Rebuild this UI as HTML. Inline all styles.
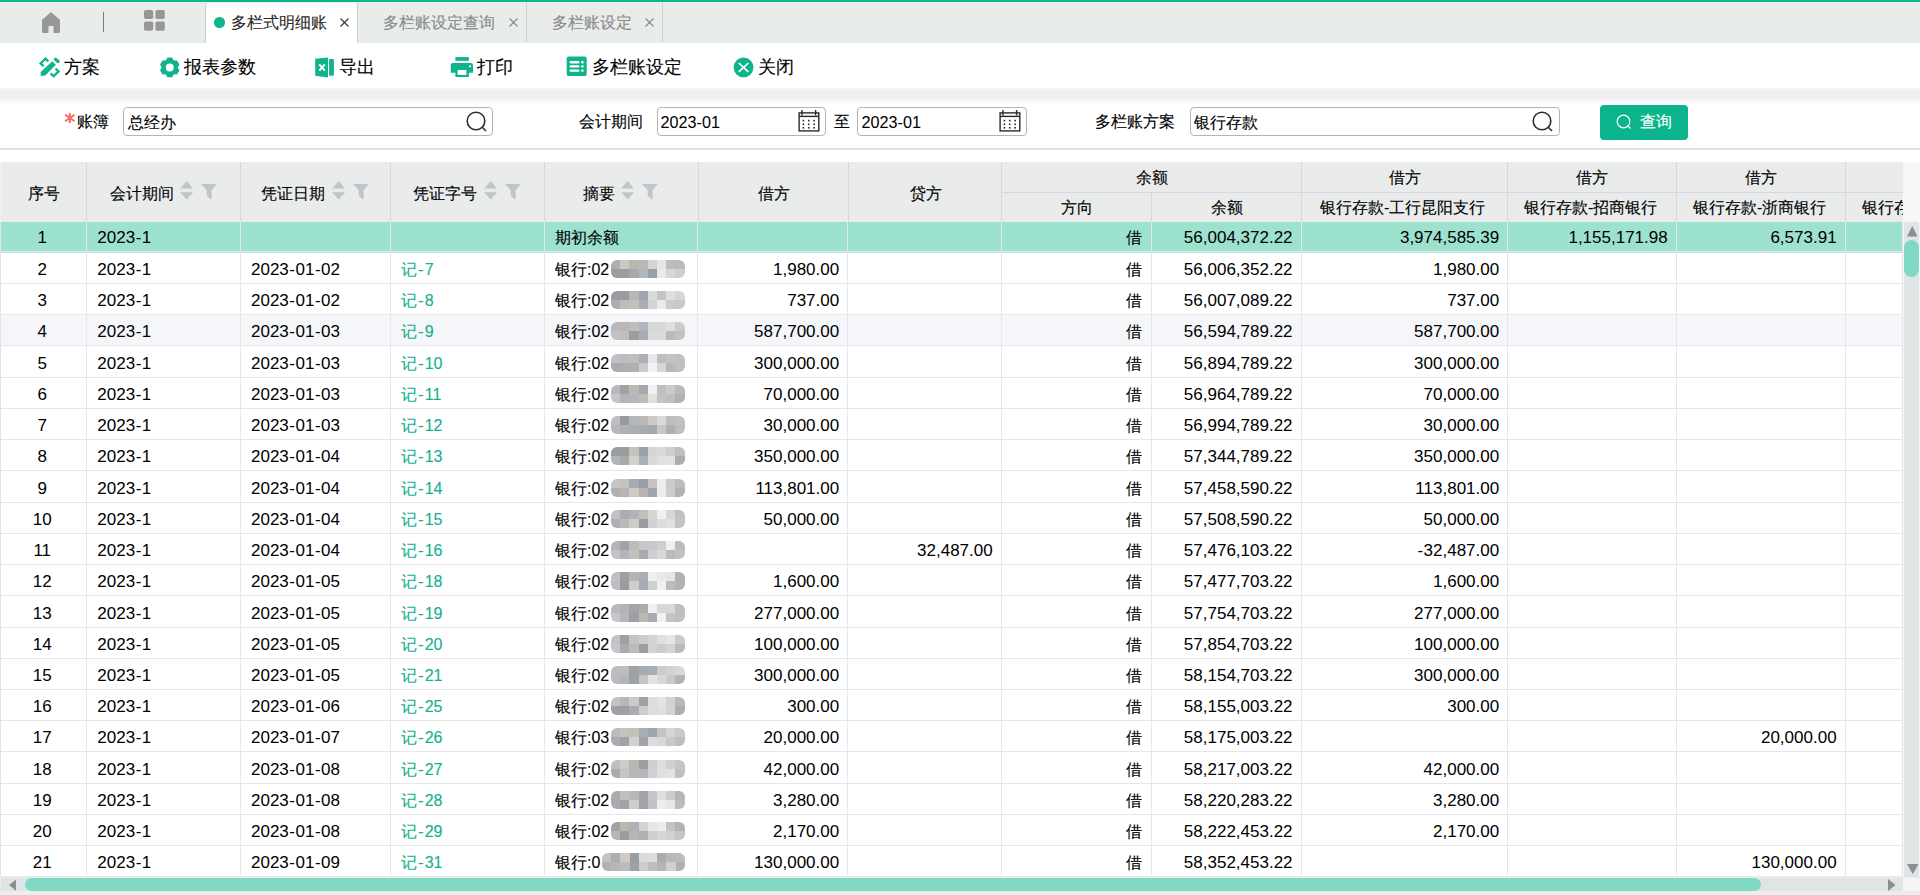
<!DOCTYPE html><html><head><meta charset="utf-8"><title>多栏式明细账</title><style>
*{box-sizing:border-box;margin:0;padding:0}
html,body{width:1920px;height:895px;overflow:hidden;background:#fff}
body{position:relative;font-family:"Liberation Sans",sans-serif;color:#000}
.t16,.t18{-webkit-text-stroke:0.12px currentColor}
.a{position:absolute}
.t16{font-size:16px;line-height:20px;white-space:nowrap}
.t18{font-size:18px;line-height:22px;white-space:nowrap}
.num{font-size:17px;line-height:20px;white-space:nowrap}
.hy{margin:0 0.5px}
.row{position:absolute;left:0;width:1903px;border-bottom:1px solid #e7e7ea}
.c{position:absolute;top:0;height:100%;display:flex;align-items:center;white-space:nowrap;overflow:hidden}
.vb{position:absolute;top:222px;height:655px;width:1px;background:#e7e7ea}
.hb{position:absolute;background:#d6d6e6}
.mz{position:absolute;display:grid;grid-template-columns:repeat(8,9.2px);grid-template-rows:repeat(2,9px);border-radius:6px;overflow:hidden}
</style></head><body>
<div class="a" style="left:0;top:0;width:1920px;height:2px;background:#0fb38c"></div>
<div class="a" style="left:0;top:2px;width:1920px;height:40.5px;background:#e8eceb"></div>
<svg class="a" style="left:42px;top:12px" width="18" height="21" viewBox="0 0 18 21"><path d="M9 0 L0 8 L0 19.5 Q0 21 1.5 21 L6.5 21 L6.5 14 L11.5 14 L11.5 21 L16.5 21 Q18 21 18 19.5 L18 8 Z" fill="#979797"/></svg>
<div class="a" style="left:103px;top:12px;width:1.2px;height:20px;background:#7a7a7a"></div>
<svg class="a" style="left:144px;top:10px" width="21" height="21" viewBox="0 0 21 21" fill="#979797"><rect x="0" y="0" width="9.2" height="9" rx="1.8"/><rect x="11.4" y="0" width="9.4" height="9" rx="1.8"/><rect x="0" y="11.4" width="9.2" height="9.4" rx="1.8"/><rect x="11.4" y="11.4" width="9.4" height="9.4" rx="1.8"/></svg>
<div class="a" style="left:205px;top:2.5px;width:152px;height:40.5px;background:#fff;border-left:1px solid #c9c9cf;border-radius:3px 3px 0 0"></div>
<div class="a" style="left:214px;top:17px;width:10.5px;height:10.5px;border-radius:50%;background:#0fb38c"></div>
<div class="a t16" style="left:231px;top:13px;color:#2a2a2a">多栏式明细账</div>
<svg class="a" style="left:340px;top:18px" width="9" height="9" viewBox="0 0 9 9"><path d="M0.5 0.5 L8.5 8.5 M8.5 0.5 L0.5 8.5" stroke="#333" stroke-width="1.1"/></svg>
<div class="a" style="left:357px;top:3px;width:1px;height:39px;background:#cfd2d2"></div>
<div class="a t16" style="left:383px;top:13px;color:#8a8a8a">多栏账设定查询</div>
<svg class="a" style="left:509px;top:18px" width="9" height="9" viewBox="0 0 9 9"><path d="M0.5 0.5 L8.5 8.5 M8.5 0.5 L0.5 8.5" stroke="#8a8a8a" stroke-width="1.1"/></svg>
<div class="a" style="left:526px;top:3px;width:1px;height:39px;background:#cfd2d2"></div>
<div class="a t16" style="left:552px;top:13px;color:#8a8a8a">多栏账设定</div>
<svg class="a" style="left:645px;top:18px" width="9" height="9" viewBox="0 0 9 9"><path d="M0.5 0.5 L8.5 8.5 M8.5 0.5 L0.5 8.5" stroke="#8a8a8a" stroke-width="1.1"/></svg>
<div class="a" style="left:662px;top:3px;width:1px;height:39px;background:#cfd2d2"></div>
<svg class="a" style="left:36px;top:53px" width="28" height="28" viewBox="0 0 28 28"><path d="M12.3 8.4 L9.4 5.6 L4.6 10.4 L7.5 13.2" stroke="#0fb38c" stroke-width="2.3" fill="none"/><path d="M19.4 6.3 L22.2 8.5" stroke="#0fb38c" stroke-width="3.2" stroke-linecap="round" fill="none"/><path d="M16.3 8.2 L19.9 11.7 L9 22.8 H4.7 V19 Z" fill="#0fb38c"/><path d="M19.5 15.5 L22.6 18.4 L17.6 23.2 L14.6 20.4" stroke="#0fb38c" stroke-width="2.3" fill="none"/></svg>
<div class="a t18" style="left:63.5px;top:56px">方案</div>
<svg class="a" style="left:156px;top:53px" width="28" height="28" viewBox="0 0 28 28"><path fill="#0fb38c" fill-rule="evenodd" d="M10.24 6.88 L11.31 4.60 L16.19 4.60 L17.26 6.88 L18.51 7.60 L21.02 7.38 L23.46 11.62 L22.02 13.68 L22.02 15.12 L23.46 17.18 L21.02 21.42 L18.51 21.20 L17.26 21.92 L16.19 24.20 L11.31 24.20 L10.24 21.92 L8.99 21.20 L6.48 21.42 L4.04 17.18 L5.48 15.12 L5.48 13.68 L4.04 11.62 L6.48 7.38 L8.99 7.60 Z M13.75 10.4 A4 4 0 1 0 13.75 18.4 A4 4 0 1 0 13.75 10.4 Z"/></svg>
<div class="a t18" style="left:183.75px;top:56px">报表参数</div>
<svg class="a" style="left:310px;top:53px" width="28" height="28" viewBox="0 0 28 28"><path d="M5.2 5.8 L18 4.5 V24.4 L5.2 22.8 Z" fill="#0fb38c"/><path d="M19.1 5.9 H22.7 Q23.9 5.9 23.9 7.1 V21.6 Q23.9 22.8 22.7 22.8 H19.1 Z" fill="#0fb38c"/><path d="M9.3 11.4 L14.8 17.7 M14.8 11.4 L9.3 17.7" stroke="#fff" stroke-width="1.9"/></svg>
<div class="a t18" style="left:338.75px;top:56px">导出</div>
<svg class="a" style="left:447px;top:53px" width="30" height="28" viewBox="0 0 30 28"><rect x="8.4" y="4.1" width="13.5" height="3.7" fill="#0fb38c"/><path d="M5.9 10 H23.9 Q26 10 26 12.1 V19.7 H21.9 V24.1 H8.4 V19.7 H3.75 V12.1 Q3.75 10 5.9 10 Z" fill="#0fb38c"/><rect x="10.6" y="17" width="8.8" height="4.9" fill="#fff"/><circle cx="23" cy="13.3" r="1.1" fill="#fff"/></svg>
<div class="a t18" style="left:477px;top:56px">打印</div>
<svg class="a" style="left:562px;top:52px" width="28" height="28" viewBox="0 0 28 28"><rect x="4.7" y="4.4" width="20" height="19.7" rx="2.2" fill="#0fb38c"/><rect x="7.5" y="9.1" width="10" height="2.3" rx="1.1" fill="#fff"/><rect x="7.5" y="13.2" width="10" height="2.4" rx="1.1" fill="#fff"/><rect x="7.5" y="17.4" width="10" height="2.4" rx="1.1" fill="#fff"/><rect x="19.1" y="9.1" width="2.6" height="2.3" rx="1" fill="#fff"/><rect x="19.1" y="13.2" width="2.6" height="2.4" rx="1" fill="#fff"/><rect x="19.1" y="17.4" width="2.6" height="2.4" rx="1" fill="#fff"/></svg>
<div class="a t18" style="left:592px;top:56px">多栏账设定</div>
<svg class="a" style="left:729px;top:53px" width="28" height="28" viewBox="0 0 28 28"><circle cx="14.55" cy="14.4" r="9.9" fill="#0fb38c"/><path d="M9.8 10 L19.3 18.8 M19.3 10 L9.8 18.8" stroke="#fff" stroke-width="1.7"/></svg>
<div class="a t18" style="left:757.5px;top:56px">关闭</div>
<div class="a" style="left:0;top:88px;width:1920px;height:16px;background:linear-gradient(to bottom,#f5f5f5 0%,#ededed 35%,#f3f3f3 68%,#fefefe 100%)"></div>
<svg class="a" style="left:60px;top:108px" width="20" height="20" viewBox="0 0 20 20"><path d="M9.8 5.1 V14.9 M5.1 6.7 L14.5 13.2 M14.5 6.7 L5.1 13.2" stroke="#f4676b" stroke-width="2"/></svg>
<div class="a t16" style="left:77px;top:111.5px">账簿</div>
<div class="a" style="left:123px;top:107px;width:370px;height:29px;border:1px solid #b4b4b4;border-radius:4px;background:#fff"></div>
<div class="a t16" style="left:128px;top:112.5px">总经办</div>
<svg class="a" style="left:465px;top:110px" width="23" height="23" viewBox="0 0 23 23"><circle cx="11" cy="11" r="8.8" stroke="#2b2b2b" stroke-width="1.6" fill="none"/><path d="M17.3 17.3 L21 21" stroke="#2b2b2b" stroke-width="1.6"/></svg>
<div class="a t16" style="left:578.5px;top:111.5px">会计期间</div>
<div class="a" style="left:656.5px;top:107px;width:169px;height:29px;border:1px solid #b4b4b4;border-radius:4px;background:#fff"></div>
<div class="a num" style="left:660.5px;top:111.5px;font-size:16.2px">2023-01</div>
<svg class="a" style="left:794px;top:106px" width="30" height="30" viewBox="0 0 30 30"><rect x="5.1" y="6.9" width="19.7" height="18" stroke="#2a2a2a" stroke-width="1.4" fill="none"/><path d="M5.1 10.4 H24.8" stroke="#2a2a2a" stroke-width="1.4"/><path d="M8 4 V9.5 M21.6 4 V9.5" stroke="#2a2a2a" stroke-width="1.4"/><rect x="8.60" y="13.80" width="1.6" height="1.6" fill="#2a2a2a"/><rect x="8.60" y="17.50" width="1.6" height="1.6" fill="#2a2a2a"/><rect x="8.60" y="21.00" width="1.6" height="1.6" fill="#2a2a2a"/><rect x="13.95" y="13.80" width="1.6" height="1.6" fill="#2a2a2a"/><rect x="13.95" y="17.50" width="1.6" height="1.6" fill="#2a2a2a"/><rect x="13.95" y="21.00" width="1.6" height="1.6" fill="#2a2a2a"/><rect x="19.30" y="13.80" width="1.6" height="1.6" fill="#2a2a2a"/><rect x="19.30" y="17.50" width="1.6" height="1.6" fill="#2a2a2a"/><rect x="19.30" y="21.00" width="1.6" height="1.6" fill="#2a2a2a"/></svg>
<div class="a t16" style="left:833.5px;top:111.5px">至</div>
<div class="a" style="left:857px;top:107px;width:169.5px;height:29px;border:1px solid #b4b4b4;border-radius:4px;background:#fff"></div>
<div class="a num" style="left:861.5px;top:111.5px;font-size:16.2px">2023-01</div>
<svg class="a" style="left:995px;top:106px" width="30" height="30" viewBox="0 0 30 30"><rect x="5.1" y="6.9" width="19.7" height="18" stroke="#2a2a2a" stroke-width="1.4" fill="none"/><path d="M5.1 10.4 H24.8" stroke="#2a2a2a" stroke-width="1.4"/><path d="M8 4 V9.5 M21.6 4 V9.5" stroke="#2a2a2a" stroke-width="1.4"/><rect x="8.60" y="13.80" width="1.6" height="1.6" fill="#2a2a2a"/><rect x="8.60" y="17.50" width="1.6" height="1.6" fill="#2a2a2a"/><rect x="8.60" y="21.00" width="1.6" height="1.6" fill="#2a2a2a"/><rect x="13.95" y="13.80" width="1.6" height="1.6" fill="#2a2a2a"/><rect x="13.95" y="17.50" width="1.6" height="1.6" fill="#2a2a2a"/><rect x="13.95" y="21.00" width="1.6" height="1.6" fill="#2a2a2a"/><rect x="19.30" y="13.80" width="1.6" height="1.6" fill="#2a2a2a"/><rect x="19.30" y="17.50" width="1.6" height="1.6" fill="#2a2a2a"/><rect x="19.30" y="21.00" width="1.6" height="1.6" fill="#2a2a2a"/></svg>
<div class="a t16" style="left:1095px;top:111.5px">多栏账方案</div>
<div class="a" style="left:1189.5px;top:107px;width:370px;height:29px;border:1px solid #b4b4b4;border-radius:4px;background:#fff"></div>
<div class="a t16" style="left:1194px;top:112.5px">银行存款</div>
<svg class="a" style="left:1531px;top:110.4px" width="23" height="23" viewBox="0 0 23 23"><circle cx="11" cy="11" r="8.8" stroke="#2b2b2b" stroke-width="1.6" fill="none"/><path d="M17.3 17.3 L21 21" stroke="#2b2b2b" stroke-width="1.6"/></svg>
<div class="a" style="left:1600px;top:105px;width:88px;height:35px;border-radius:4px;background:#0bb48a"></div>
<svg class="a" style="left:1616px;top:113.5px" width="16" height="16" viewBox="0 0 16 16"><circle cx="7.5" cy="7.5" r="6.3" stroke="#fff" stroke-width="1.2" fill="none"/><path d="M12 12 L14.5 14.5" stroke="#fff" stroke-width="1.2"/></svg>
<div class="a t16" style="left:1640px;top:112px;color:#fff">查询</div>
<div class="a" style="left:0;top:148px;width:1920px;height:1.5px;background:#e2e2e2"></div>
<div class="a" style="left:0;top:162px;width:1903px;height:60px;background:#e9eceb;overflow:hidden">
<div class="hb" style="left:86px;top:0px;width:1px;height:60px"></div>
<div class="hb" style="left:240px;top:0px;width:1px;height:60px"></div>
<div class="hb" style="left:390px;top:0px;width:1px;height:60px"></div>
<div class="hb" style="left:544px;top:0px;width:1px;height:60px"></div>
<div class="hb" style="left:698px;top:0px;width:1px;height:60px"></div>
<div class="hb" style="left:848px;top:0px;width:1px;height:60px"></div>
<div class="hb" style="left:1001px;top:0px;width:1px;height:60px"></div>
<div class="hb" style="left:1151px;top:30px;width:1px;height:30px"></div>
<div class="hb" style="left:1301px;top:0px;width:1px;height:60px"></div>
<div class="hb" style="left:1507px;top:0px;width:1px;height:60px"></div>
<div class="hb" style="left:1676px;top:0px;width:1px;height:60px"></div>
<div class="hb" style="left:1845px;top:0px;width:1px;height:60px"></div>
<div class="hb" style="left:1001px;top:30px;width:902px;height:1px"></div>
<div class="a" style="left:0;top:0;width:1px;height:60px;background:#f0f2f2"></div>
<div class="a t16" style="left:28px;top:22px">序号</div>
<div class="a t16" style="left:110px;top:22px">会计期间</div>
<svg class="a" style="left:180.0px;top:19px" width="13.4" height="19" viewBox="0 0 13.4 19"><path d="M6.7 0 L13.2 7.6 H0.2 Z M0.2 11.2 H13.2 L6.7 18.6 Z" fill="#c1c4cc"/></svg><svg class="a" style="left:201.3px;top:22px" width="16" height="16" viewBox="0 0 16 16"><path d="M0 0 H15.7 L10.6 6.3 V15.2 H9.4 L5.7 11.6 V6.3 Z" fill="#c1c4cc"/></svg>
<div class="a t16" style="left:261px;top:22px">凭证日期</div>
<svg class="a" style="left:331.7px;top:19px" width="13.4" height="19" viewBox="0 0 13.4 19"><path d="M6.7 0 L13.2 7.6 H0.2 Z M0.2 11.2 H13.2 L6.7 18.6 Z" fill="#c1c4cc"/></svg><svg class="a" style="left:353px;top:22px" width="16" height="16" viewBox="0 0 16 16"><path d="M0 0 H15.7 L10.6 6.3 V15.2 H9.4 L5.7 11.6 V6.3 Z" fill="#c1c4cc"/></svg>
<div class="a t16" style="left:413px;top:22px">凭证字号</div>
<svg class="a" style="left:483.7px;top:19px" width="13.4" height="19" viewBox="0 0 13.4 19"><path d="M6.7 0 L13.2 7.6 H0.2 Z M0.2 11.2 H13.2 L6.7 18.6 Z" fill="#c1c4cc"/></svg><svg class="a" style="left:505px;top:22px" width="16" height="16" viewBox="0 0 16 16"><path d="M0 0 H15.7 L10.6 6.3 V15.2 H9.4 L5.7 11.6 V6.3 Z" fill="#c1c4cc"/></svg>
<div class="a t16" style="left:583px;top:22px">摘要</div>
<svg class="a" style="left:620.7px;top:19px" width="13.4" height="19" viewBox="0 0 13.4 19"><path d="M6.7 0 L13.2 7.6 H0.2 Z M0.2 11.2 H13.2 L6.7 18.6 Z" fill="#c1c4cc"/></svg><svg class="a" style="left:642px;top:22px" width="16" height="16" viewBox="0 0 16 16"><path d="M0 0 H15.7 L10.6 6.3 V15.2 H9.4 L5.7 11.6 V6.3 Z" fill="#c1c4cc"/></svg>
<div class="a t16" style="left:758px;top:22px">借方</div>
<div class="a t16" style="left:910px;top:22px">贷方</div>
<div class="a t16" style="left:1136px;top:6px">余额</div>
<div class="a t16" style="left:1061px;top:36px">方向</div>
<div class="a t16" style="left:1211px;top:36px">余额</div>
<div class="a t16" style="left:1389px;top:6px">借方</div>
<div class="a t16" style="left:1576px;top:6px">借方</div>
<div class="a t16" style="left:1745px;top:6px">借方</div>
<div class="a t16" style="left:1320px;top:36px">银行存款-工行昆阳支行</div>
<div class="a t16" style="left:1524px;top:36px">银行存款-招商银行</div>
<div class="a t16" style="left:1693px;top:36px">银行存款-浙商银行</div>
<div class="a t16" style="left:1862px;top:36px">银行存款-泰隆银行</div>
</div>
<div class="a" style="left:1903px;top:162px;width:17px;height:60px;background:#f7f7f7"></div>
<div class="a" style="left:0;top:222px;width:1903px;height:29px;background:#9de1cf"></div>
<div class="a" style="left:0;top:251px;width:1903px;height:1px;background:#dfe6e3"></div>
<div class="a" style="left:0;top:252px;width:1903px;height:1px;background:#b5e8da"></div>
<div class="a" style="left:0;top:223px;width:1903px;height:30px"><div class="c num" style="left:0px;width:84.5px;justify-content:center;">1</div><div class="c num" style="left:86.5px;width:154.0px;padding-left:10.8px;">2023<span class="hy">-</span>1</div><div class="c t16" style="left:544.5px;width:153.5px;padding-left:10.5px;">期初余额</div><div class="c t16" style="left:1001.5px;width:149.70000000000005px;justify-content:flex-end;padding-right:9.5px;">借</div><div class="c num" style="left:1151.2px;width:150.20000000000005px;justify-content:flex-end;padding-right:8.8px;">56,004,372.22</div><div class="c num" style="left:1301.4px;width:206.5999999999999px;justify-content:flex-end;padding-right:8.8px;">3,974,585.39</div><div class="c num" style="left:1508px;width:168.5px;justify-content:flex-end;padding-right:8.8px;">1,155,171.98</div><div class="c num" style="left:1676.5px;width:168.9000000000001px;justify-content:flex-end;padding-right:8.8px;">6,573.91</div></div>
<div class="a" style="left:0;top:283px;width:1903px;height:1px;background:#e7e7ea"></div>
<div class="a" style="left:0;top:255px;width:1903px;height:30px"><div class="c num" style="left:0px;width:84.5px;justify-content:center;">2</div><div class="c num" style="left:86.5px;width:154.0px;padding-left:10.8px;">2023<span class="hy">-</span>1</div><div class="c num" style="left:240.5px;width:150.0px;padding-left:10.5px;">2023<span class="hy">-</span>01<span class="hy">-</span>02</div><div class="c t16" style="left:390.5px;width:154.0px;padding-left:10.5px;color:#13b08e;">记<span style="font-size:17px;margin:0 1px">-</span>7</div><div class="c t16" style="left:544.5px;width:153.5px;padding-left:10.5px;">银行:02</div><div class="c num" style="left:698px;width:150px;justify-content:flex-end;padding-right:8.8px;">1,980.00</div><div class="c num" style="left:848px;width:153.5px;justify-content:flex-end;padding-right:8.8px;"></div><div class="c t16" style="left:1001.5px;width:149.70000000000005px;justify-content:flex-end;padding-right:9.5px;">借</div><div class="c num" style="left:1151.2px;width:150.20000000000005px;justify-content:flex-end;padding-right:8.8px;">56,006,352.22</div><div class="c num" style="left:1301.4px;width:206.5999999999999px;justify-content:flex-end;padding-right:8.8px;">1,980.00</div><div class="c num" style="left:1508px;width:168.5px;justify-content:flex-end;padding-right:8.8px;"></div><div class="c num" style="left:1676.5px;width:168.9000000000001px;justify-content:flex-end;padding-right:8.8px;"></div></div>
<div class="mz" style="left:611px;top:260px;grid-template-columns:repeat(8,9.2px)"><div style="background:rgb(174,174,176)"></div><div style="background:rgb(204,200,196)"></div><div style="background:rgb(186,182,178)"></div><div style="background:rgb(187,183,179)"></div><div style="background:rgb(212,212,212)"></div><div style="background:rgb(230,230,230)"></div><div style="background:rgb(189,189,190)"></div><div style="background:rgb(187,186,187)"></div><div style="background:rgb(156,157,160)"></div><div style="background:rgb(156,157,160)"></div><div style="background:rgb(167,168,171)"></div><div style="background:rgb(178,183,189)"></div><div style="background:rgb(155,160,166)"></div><div style="background:rgb(234,234,234)"></div><div style="background:rgb(215,215,215)"></div><div style="background:rgb(206,206,207)"></div></div>
<div class="a" style="left:0;top:314px;width:1903px;height:1px;background:#e7e7ea"></div>
<div class="a" style="left:0;top:286px;width:1903px;height:30px"><div class="c num" style="left:0px;width:84.5px;justify-content:center;">3</div><div class="c num" style="left:86.5px;width:154.0px;padding-left:10.8px;">2023<span class="hy">-</span>1</div><div class="c num" style="left:240.5px;width:150.0px;padding-left:10.5px;">2023<span class="hy">-</span>01<span class="hy">-</span>02</div><div class="c t16" style="left:390.5px;width:154.0px;padding-left:10.5px;color:#13b08e;">记<span style="font-size:17px;margin:0 1px">-</span>8</div><div class="c t16" style="left:544.5px;width:153.5px;padding-left:10.5px;">银行:02</div><div class="c num" style="left:698px;width:150px;justify-content:flex-end;padding-right:8.8px;">737.00</div><div class="c num" style="left:848px;width:153.5px;justify-content:flex-end;padding-right:8.8px;"></div><div class="c t16" style="left:1001.5px;width:149.70000000000005px;justify-content:flex-end;padding-right:9.5px;">借</div><div class="c num" style="left:1151.2px;width:150.20000000000005px;justify-content:flex-end;padding-right:8.8px;">56,007,089.22</div><div class="c num" style="left:1301.4px;width:206.5999999999999px;justify-content:flex-end;padding-right:8.8px;">737.00</div><div class="c num" style="left:1508px;width:168.5px;justify-content:flex-end;padding-right:8.8px;"></div><div class="c num" style="left:1676.5px;width:168.9000000000001px;justify-content:flex-end;padding-right:8.8px;"></div></div>
<div class="mz" style="left:611px;top:291px;grid-template-columns:repeat(8,9.2px)"><div style="background:rgb(155,156,159)"></div><div style="background:rgb(155,156,159)"></div><div style="background:rgb(181,182,185)"></div><div style="background:rgb(161,166,172)"></div><div style="background:rgb(218,218,218)"></div><div style="background:rgb(197,197,197)"></div><div style="background:rgb(223,223,223)"></div><div style="background:rgb(214,214,215)"></div><div style="background:rgb(173,173,175)"></div><div style="background:rgb(188,188,190)"></div><div style="background:rgb(195,191,187)"></div><div style="background:rgb(169,174,180)"></div><div style="background:rgb(212,212,212)"></div><div style="background:rgb(233,233,233)"></div><div style="background:rgb(203,203,204)"></div><div style="background:rgb(201,201,202)"></div></div>
<div class="a" style="left:0;top:315px;width:1903px;height:30px;background:#f5f6fa"></div>
<div class="a" style="left:0;top:345px;width:1903px;height:1px;background:#e7e7ea"></div>
<div class="a" style="left:0;top:317px;width:1903px;height:30px"><div class="c num" style="left:0px;width:84.5px;justify-content:center;">4</div><div class="c num" style="left:86.5px;width:154.0px;padding-left:10.8px;">2023<span class="hy">-</span>1</div><div class="c num" style="left:240.5px;width:150.0px;padding-left:10.5px;">2023<span class="hy">-</span>01<span class="hy">-</span>03</div><div class="c t16" style="left:390.5px;width:154.0px;padding-left:10.5px;color:#13b08e;">记<span style="font-size:17px;margin:0 1px">-</span>9</div><div class="c t16" style="left:544.5px;width:153.5px;padding-left:10.5px;">银行:02</div><div class="c num" style="left:698px;width:150px;justify-content:flex-end;padding-right:8.8px;">587,700.00</div><div class="c num" style="left:848px;width:153.5px;justify-content:flex-end;padding-right:8.8px;"></div><div class="c t16" style="left:1001.5px;width:149.70000000000005px;justify-content:flex-end;padding-right:9.5px;">借</div><div class="c num" style="left:1151.2px;width:150.20000000000005px;justify-content:flex-end;padding-right:8.8px;">56,594,789.22</div><div class="c num" style="left:1301.4px;width:206.5999999999999px;justify-content:flex-end;padding-right:8.8px;">587,700.00</div><div class="c num" style="left:1508px;width:168.5px;justify-content:flex-end;padding-right:8.8px;"></div><div class="c num" style="left:1676.5px;width:168.9000000000001px;justify-content:flex-end;padding-right:8.8px;"></div></div>
<div class="mz" style="left:611px;top:322px;grid-template-columns:repeat(8,9.2px)"><div style="background:rgb(184,184,186)"></div><div style="background:rgb(184,184,186)"></div><div style="background:rgb(193,189,185)"></div><div style="background:rgb(177,182,188)"></div><div style="background:rgb(216,216,216)"></div><div style="background:rgb(216,216,216)"></div><div style="background:rgb(223,223,223)"></div><div style="background:rgb(203,203,204)"></div><div style="background:rgb(193,193,195)"></div><div style="background:rgb(193,189,185)"></div><div style="background:rgb(156,157,160)"></div><div style="background:rgb(168,173,179)"></div><div style="background:rgb(219,219,219)"></div><div style="background:rgb(218,218,218)"></div><div style="background:rgb(187,186,187)"></div><div style="background:rgb(195,194,195)"></div></div>
<div class="a" style="left:0;top:377px;width:1903px;height:1px;background:#e7e7ea"></div>
<div class="a" style="left:0;top:349px;width:1903px;height:30px"><div class="c num" style="left:0px;width:84.5px;justify-content:center;">5</div><div class="c num" style="left:86.5px;width:154.0px;padding-left:10.8px;">2023<span class="hy">-</span>1</div><div class="c num" style="left:240.5px;width:150.0px;padding-left:10.5px;">2023<span class="hy">-</span>01<span class="hy">-</span>03</div><div class="c t16" style="left:390.5px;width:154.0px;padding-left:10.5px;color:#13b08e;">记<span style="font-size:17px;margin:0 1px">-</span>10</div><div class="c t16" style="left:544.5px;width:153.5px;padding-left:10.5px;">银行:02</div><div class="c num" style="left:698px;width:150px;justify-content:flex-end;padding-right:8.8px;">300,000.00</div><div class="c num" style="left:848px;width:153.5px;justify-content:flex-end;padding-right:8.8px;"></div><div class="c t16" style="left:1001.5px;width:149.70000000000005px;justify-content:flex-end;padding-right:9.5px;">借</div><div class="c num" style="left:1151.2px;width:150.20000000000005px;justify-content:flex-end;padding-right:8.8px;">56,894,789.22</div><div class="c num" style="left:1301.4px;width:206.5999999999999px;justify-content:flex-end;padding-right:8.8px;">300,000.00</div><div class="c num" style="left:1508px;width:168.5px;justify-content:flex-end;padding-right:8.8px;"></div><div class="c num" style="left:1676.5px;width:168.9000000000001px;justify-content:flex-end;padding-right:8.8px;"></div></div>
<div class="mz" style="left:611px;top:354px;grid-template-columns:repeat(8,9.2px)"><div style="background:rgb(194,194,196)"></div><div style="background:rgb(188,188,190)"></div><div style="background:rgb(194,190,186)"></div><div style="background:rgb(171,176,182)"></div><div style="background:rgb(232,232,232)"></div><div style="background:rgb(190,190,191)"></div><div style="background:rgb(196,196,197)"></div><div style="background:rgb(192,192,194)"></div><div style="background:rgb(171,171,173)"></div><div style="background:rgb(174,175,178)"></div><div style="background:rgb(175,176,179)"></div><div style="background:rgb(203,203,203)"></div><div style="background:rgb(242,242,242)"></div><div style="background:rgb(214,214,214)"></div><div style="background:rgb(185,184,185)"></div><div style="background:rgb(193,192,193)"></div></div>
<div class="a" style="left:0;top:408px;width:1903px;height:1px;background:#e7e7ea"></div>
<div class="a" style="left:0;top:380px;width:1903px;height:30px"><div class="c num" style="left:0px;width:84.5px;justify-content:center;">6</div><div class="c num" style="left:86.5px;width:154.0px;padding-left:10.8px;">2023<span class="hy">-</span>1</div><div class="c num" style="left:240.5px;width:150.0px;padding-left:10.5px;">2023<span class="hy">-</span>01<span class="hy">-</span>03</div><div class="c t16" style="left:390.5px;width:154.0px;padding-left:10.5px;color:#13b08e;">记<span style="font-size:17px;margin:0 1px">-</span>11</div><div class="c t16" style="left:544.5px;width:153.5px;padding-left:10.5px;">银行:02</div><div class="c num" style="left:698px;width:150px;justify-content:flex-end;padding-right:8.8px;">70,000.00</div><div class="c num" style="left:848px;width:153.5px;justify-content:flex-end;padding-right:8.8px;"></div><div class="c t16" style="left:1001.5px;width:149.70000000000005px;justify-content:flex-end;padding-right:9.5px;">借</div><div class="c num" style="left:1151.2px;width:150.20000000000005px;justify-content:flex-end;padding-right:8.8px;">56,964,789.22</div><div class="c num" style="left:1301.4px;width:206.5999999999999px;justify-content:flex-end;padding-right:8.8px;">70,000.00</div><div class="c num" style="left:1508px;width:168.5px;justify-content:flex-end;padding-right:8.8px;"></div><div class="c num" style="left:1676.5px;width:168.9000000000001px;justify-content:flex-end;padding-right:8.8px;"></div></div>
<div class="mz" style="left:611px;top:385px;grid-template-columns:repeat(8,9.2px)"><div style="background:rgb(185,185,187)"></div><div style="background:rgb(160,161,164)"></div><div style="background:rgb(188,184,180)"></div><div style="background:rgb(164,169,175)"></div><div style="background:rgb(241,241,241)"></div><div style="background:rgb(190,190,191)"></div><div style="background:rgb(202,202,203)"></div><div style="background:rgb(187,187,189)"></div><div style="background:rgb(198,198,200)"></div><div style="background:rgb(180,181,184)"></div><div style="background:rgb(179,184,190)"></div><div style="background:rgb(192,188,184)"></div><div style="background:rgb(225,225,225)"></div><div style="background:rgb(195,195,196)"></div><div style="background:rgb(190,190,191)"></div><div style="background:rgb(178,177,178)"></div></div>
<div class="a" style="left:0;top:439px;width:1903px;height:1px;background:#e7e7ea"></div>
<div class="a" style="left:0;top:411px;width:1903px;height:30px"><div class="c num" style="left:0px;width:84.5px;justify-content:center;">7</div><div class="c num" style="left:86.5px;width:154.0px;padding-left:10.8px;">2023<span class="hy">-</span>1</div><div class="c num" style="left:240.5px;width:150.0px;padding-left:10.5px;">2023<span class="hy">-</span>01<span class="hy">-</span>03</div><div class="c t16" style="left:390.5px;width:154.0px;padding-left:10.5px;color:#13b08e;">记<span style="font-size:17px;margin:0 1px">-</span>12</div><div class="c t16" style="left:544.5px;width:153.5px;padding-left:10.5px;">银行:02</div><div class="c num" style="left:698px;width:150px;justify-content:flex-end;padding-right:8.8px;">30,000.00</div><div class="c num" style="left:848px;width:153.5px;justify-content:flex-end;padding-right:8.8px;"></div><div class="c t16" style="left:1001.5px;width:149.70000000000005px;justify-content:flex-end;padding-right:9.5px;">借</div><div class="c num" style="left:1151.2px;width:150.20000000000005px;justify-content:flex-end;padding-right:8.8px;">56,994,789.22</div><div class="c num" style="left:1301.4px;width:206.5999999999999px;justify-content:flex-end;padding-right:8.8px;">30,000.00</div><div class="c num" style="left:1508px;width:168.5px;justify-content:flex-end;padding-right:8.8px;"></div><div class="c num" style="left:1676.5px;width:168.9000000000001px;justify-content:flex-end;padding-right:8.8px;"></div></div>
<div class="mz" style="left:611px;top:416px;grid-template-columns:repeat(8,9.2px)"><div style="background:rgb(191,191,193)"></div><div style="background:rgb(154,155,158)"></div><div style="background:rgb(178,183,189)"></div><div style="background:rgb(189,185,181)"></div><div style="background:rgb(203,203,203)"></div><div style="background:rgb(218,218,218)"></div><div style="background:rgb(191,190,191)"></div><div style="background:rgb(193,192,193)"></div><div style="background:rgb(184,183,184)"></div><div style="background:rgb(176,177,180)"></div><div style="background:rgb(173,174,177)"></div><div style="background:rgb(166,171,177)"></div><div style="background:rgb(164,169,175)"></div><div style="background:rgb(200,200,201)"></div><div style="background:rgb(177,176,177)"></div><div style="background:rgb(190,190,192)"></div></div>
<div class="a" style="left:0;top:470px;width:1903px;height:1px;background:#e7e7ea"></div>
<div class="a" style="left:0;top:442px;width:1903px;height:30px"><div class="c num" style="left:0px;width:84.5px;justify-content:center;">8</div><div class="c num" style="left:86.5px;width:154.0px;padding-left:10.8px;">2023<span class="hy">-</span>1</div><div class="c num" style="left:240.5px;width:150.0px;padding-left:10.5px;">2023<span class="hy">-</span>01<span class="hy">-</span>04</div><div class="c t16" style="left:390.5px;width:154.0px;padding-left:10.5px;color:#13b08e;">记<span style="font-size:17px;margin:0 1px">-</span>13</div><div class="c t16" style="left:544.5px;width:153.5px;padding-left:10.5px;">银行:02</div><div class="c num" style="left:698px;width:150px;justify-content:flex-end;padding-right:8.8px;">350,000.00</div><div class="c num" style="left:848px;width:153.5px;justify-content:flex-end;padding-right:8.8px;"></div><div class="c t16" style="left:1001.5px;width:149.70000000000005px;justify-content:flex-end;padding-right:9.5px;">借</div><div class="c num" style="left:1151.2px;width:150.20000000000005px;justify-content:flex-end;padding-right:8.8px;">57,344,789.22</div><div class="c num" style="left:1301.4px;width:206.5999999999999px;justify-content:flex-end;padding-right:8.8px;">350,000.00</div><div class="c num" style="left:1508px;width:168.5px;justify-content:flex-end;padding-right:8.8px;"></div><div class="c num" style="left:1676.5px;width:168.9000000000001px;justify-content:flex-end;padding-right:8.8px;"></div></div>
<div class="mz" style="left:611px;top:447px;grid-template-columns:repeat(8,9.2px)"><div style="background:rgb(155,156,159)"></div><div style="background:rgb(156,157,160)"></div><div style="background:rgb(198,194,190)"></div><div style="background:rgb(155,160,166)"></div><div style="background:rgb(213,213,213)"></div><div style="background:rgb(217,217,217)"></div><div style="background:rgb(206,206,207)"></div><div style="background:rgb(191,190,191)"></div><div style="background:rgb(181,181,183)"></div><div style="background:rgb(170,170,172)"></div><div style="background:rgb(211,207,203)"></div><div style="background:rgb(171,176,182)"></div><div style="background:rgb(218,218,218)"></div><div style="background:rgb(225,225,225)"></div><div style="background:rgb(225,225,225)"></div><div style="background:rgb(173,173,175)"></div></div>
<div class="a" style="left:0;top:502px;width:1903px;height:1px;background:#e7e7ea"></div>
<div class="a" style="left:0;top:474px;width:1903px;height:30px"><div class="c num" style="left:0px;width:84.5px;justify-content:center;">9</div><div class="c num" style="left:86.5px;width:154.0px;padding-left:10.8px;">2023<span class="hy">-</span>1</div><div class="c num" style="left:240.5px;width:150.0px;padding-left:10.5px;">2023<span class="hy">-</span>01<span class="hy">-</span>04</div><div class="c t16" style="left:390.5px;width:154.0px;padding-left:10.5px;color:#13b08e;">记<span style="font-size:17px;margin:0 1px">-</span>14</div><div class="c t16" style="left:544.5px;width:153.5px;padding-left:10.5px;">银行:02</div><div class="c num" style="left:698px;width:150px;justify-content:flex-end;padding-right:8.8px;">113,801.00</div><div class="c num" style="left:848px;width:153.5px;justify-content:flex-end;padding-right:8.8px;"></div><div class="c t16" style="left:1001.5px;width:149.70000000000005px;justify-content:flex-end;padding-right:9.5px;">借</div><div class="c num" style="left:1151.2px;width:150.20000000000005px;justify-content:flex-end;padding-right:8.8px;">57,458,590.22</div><div class="c num" style="left:1301.4px;width:206.5999999999999px;justify-content:flex-end;padding-right:8.8px;">113,801.00</div><div class="c num" style="left:1508px;width:168.5px;justify-content:flex-end;padding-right:8.8px;"></div><div class="c num" style="left:1676.5px;width:168.9000000000001px;justify-content:flex-end;padding-right:8.8px;"></div></div>
<div class="mz" style="left:611px;top:479px;grid-template-columns:repeat(8,9.2px)"><div style="background:rgb(197,197,199)"></div><div style="background:rgb(198,194,190)"></div><div style="background:rgb(167,172,178)"></div><div style="background:rgb(154,159,165)"></div><div style="background:rgb(197,197,197)"></div><div style="background:rgb(237,237,237)"></div><div style="background:rgb(203,203,204)"></div><div style="background:rgb(190,189,190)"></div><div style="background:rgb(176,176,178)"></div><div style="background:rgb(181,181,183)"></div><div style="background:rgb(206,202,198)"></div><div style="background:rgb(184,180,176)"></div><div style="background:rgb(161,166,172)"></div><div style="background:rgb(236,236,236)"></div><div style="background:rgb(204,204,205)"></div><div style="background:rgb(179,178,179)"></div></div>
<div class="a" style="left:0;top:533px;width:1903px;height:1px;background:#e7e7ea"></div>
<div class="a" style="left:0;top:505px;width:1903px;height:30px"><div class="c num" style="left:0px;width:84.5px;justify-content:center;">10</div><div class="c num" style="left:86.5px;width:154.0px;padding-left:10.8px;">2023<span class="hy">-</span>1</div><div class="c num" style="left:240.5px;width:150.0px;padding-left:10.5px;">2023<span class="hy">-</span>01<span class="hy">-</span>04</div><div class="c t16" style="left:390.5px;width:154.0px;padding-left:10.5px;color:#13b08e;">记<span style="font-size:17px;margin:0 1px">-</span>15</div><div class="c t16" style="left:544.5px;width:153.5px;padding-left:10.5px;">银行:02</div><div class="c num" style="left:698px;width:150px;justify-content:flex-end;padding-right:8.8px;">50,000.00</div><div class="c num" style="left:848px;width:153.5px;justify-content:flex-end;padding-right:8.8px;"></div><div class="c t16" style="left:1001.5px;width:149.70000000000005px;justify-content:flex-end;padding-right:9.5px;">借</div><div class="c num" style="left:1151.2px;width:150.20000000000005px;justify-content:flex-end;padding-right:8.8px;">57,508,590.22</div><div class="c num" style="left:1301.4px;width:206.5999999999999px;justify-content:flex-end;padding-right:8.8px;">50,000.00</div><div class="c num" style="left:1508px;width:168.5px;justify-content:flex-end;padding-right:8.8px;"></div><div class="c num" style="left:1676.5px;width:168.9000000000001px;justify-content:flex-end;padding-right:8.8px;"></div></div>
<div class="mz" style="left:611px;top:510px;grid-template-columns:repeat(8,9.2px)"><div style="background:rgb(194,194,196)"></div><div style="background:rgb(171,172,175)"></div><div style="background:rgb(178,179,182)"></div><div style="background:rgb(194,190,186)"></div><div style="background:rgb(213,213,213)"></div><div style="background:rgb(239,239,239)"></div><div style="background:rgb(214,214,215)"></div><div style="background:rgb(193,193,195)"></div><div style="background:rgb(176,176,178)"></div><div style="background:rgb(185,185,187)"></div><div style="background:rgb(207,203,199)"></div><div style="background:rgb(152,157,163)"></div><div style="background:rgb(209,209,209)"></div><div style="background:rgb(220,220,220)"></div><div style="background:rgb(225,225,225)"></div><div style="background:rgb(195,195,197)"></div></div>
<div class="a" style="left:0;top:564px;width:1903px;height:1px;background:#e7e7ea"></div>
<div class="a" style="left:0;top:536px;width:1903px;height:30px"><div class="c num" style="left:0px;width:84.5px;justify-content:center;">11</div><div class="c num" style="left:86.5px;width:154.0px;padding-left:10.8px;">2023<span class="hy">-</span>1</div><div class="c num" style="left:240.5px;width:150.0px;padding-left:10.5px;">2023<span class="hy">-</span>01<span class="hy">-</span>04</div><div class="c t16" style="left:390.5px;width:154.0px;padding-left:10.5px;color:#13b08e;">记<span style="font-size:17px;margin:0 1px">-</span>16</div><div class="c t16" style="left:544.5px;width:153.5px;padding-left:10.5px;">银行:02</div><div class="c num" style="left:698px;width:150px;justify-content:flex-end;padding-right:8.8px;"></div><div class="c num" style="left:848px;width:153.5px;justify-content:flex-end;padding-right:8.8px;">32,487.00</div><div class="c t16" style="left:1001.5px;width:149.70000000000005px;justify-content:flex-end;padding-right:9.5px;">借</div><div class="c num" style="left:1151.2px;width:150.20000000000005px;justify-content:flex-end;padding-right:8.8px;">57,476,103.22</div><div class="c num" style="left:1301.4px;width:206.5999999999999px;justify-content:flex-end;padding-right:8.8px;"><span class="hy">-</span>32,487.00</div><div class="c num" style="left:1508px;width:168.5px;justify-content:flex-end;padding-right:8.8px;"></div><div class="c num" style="left:1676.5px;width:168.9000000000001px;justify-content:flex-end;padding-right:8.8px;"></div></div>
<div class="mz" style="left:611px;top:541px;grid-template-columns:repeat(8,9.2px)"><div style="background:rgb(181,181,183)"></div><div style="background:rgb(161,162,165)"></div><div style="background:rgb(191,187,183)"></div><div style="background:rgb(200,200,200)"></div><div style="background:rgb(200,200,200)"></div><div style="background:rgb(207,207,208)"></div><div style="background:rgb(240,240,240)"></div><div style="background:rgb(189,188,189)"></div><div style="background:rgb(195,195,197)"></div><div style="background:rgb(180,181,184)"></div><div style="background:rgb(196,192,188)"></div><div style="background:rgb(167,172,178)"></div><div style="background:rgb(207,207,207)"></div><div style="background:rgb(216,216,216)"></div><div style="background:rgb(188,187,188)"></div><div style="background:rgb(193,193,195)"></div></div>
<div class="a" style="left:0;top:595px;width:1903px;height:1px;background:#e7e7ea"></div>
<div class="a" style="left:0;top:567px;width:1903px;height:30px"><div class="c num" style="left:0px;width:84.5px;justify-content:center;">12</div><div class="c num" style="left:86.5px;width:154.0px;padding-left:10.8px;">2023<span class="hy">-</span>1</div><div class="c num" style="left:240.5px;width:150.0px;padding-left:10.5px;">2023<span class="hy">-</span>01<span class="hy">-</span>05</div><div class="c t16" style="left:390.5px;width:154.0px;padding-left:10.5px;color:#13b08e;">记<span style="font-size:17px;margin:0 1px">-</span>18</div><div class="c t16" style="left:544.5px;width:153.5px;padding-left:10.5px;">银行:02</div><div class="c num" style="left:698px;width:150px;justify-content:flex-end;padding-right:8.8px;">1,600.00</div><div class="c num" style="left:848px;width:153.5px;justify-content:flex-end;padding-right:8.8px;"></div><div class="c t16" style="left:1001.5px;width:149.70000000000005px;justify-content:flex-end;padding-right:9.5px;">借</div><div class="c num" style="left:1151.2px;width:150.20000000000005px;justify-content:flex-end;padding-right:8.8px;">57,477,703.22</div><div class="c num" style="left:1301.4px;width:206.5999999999999px;justify-content:flex-end;padding-right:8.8px;">1,600.00</div><div class="c num" style="left:1508px;width:168.5px;justify-content:flex-end;padding-right:8.8px;"></div><div class="c num" style="left:1676.5px;width:168.9000000000001px;justify-content:flex-end;padding-right:8.8px;"></div></div>
<div class="mz" style="left:611px;top:572px;grid-template-columns:repeat(8,9.2px)"><div style="background:rgb(193,193,195)"></div><div style="background:rgb(159,160,163)"></div><div style="background:rgb(184,180,176)"></div><div style="background:rgb(170,175,181)"></div><div style="background:rgb(239,239,239)"></div><div style="background:rgb(233,233,233)"></div><div style="background:rgb(229,229,229)"></div><div style="background:rgb(178,177,178)"></div><div style="background:rgb(191,190,191)"></div><div style="background:rgb(154,155,158)"></div><div style="background:rgb(209,205,201)"></div><div style="background:rgb(168,173,179)"></div><div style="background:rgb(207,207,207)"></div><div style="background:rgb(240,240,240)"></div><div style="background:rgb(188,188,189)"></div><div style="background:rgb(180,179,180)"></div></div>
<div class="a" style="left:0;top:627px;width:1903px;height:1px;background:#e7e7ea"></div>
<div class="a" style="left:0;top:599px;width:1903px;height:30px"><div class="c num" style="left:0px;width:84.5px;justify-content:center;">13</div><div class="c num" style="left:86.5px;width:154.0px;padding-left:10.8px;">2023<span class="hy">-</span>1</div><div class="c num" style="left:240.5px;width:150.0px;padding-left:10.5px;">2023<span class="hy">-</span>01<span class="hy">-</span>05</div><div class="c t16" style="left:390.5px;width:154.0px;padding-left:10.5px;color:#13b08e;">记<span style="font-size:17px;margin:0 1px">-</span>19</div><div class="c t16" style="left:544.5px;width:153.5px;padding-left:10.5px;">银行:02</div><div class="c num" style="left:698px;width:150px;justify-content:flex-end;padding-right:8.8px;">277,000.00</div><div class="c num" style="left:848px;width:153.5px;justify-content:flex-end;padding-right:8.8px;"></div><div class="c t16" style="left:1001.5px;width:149.70000000000005px;justify-content:flex-end;padding-right:9.5px;">借</div><div class="c num" style="left:1151.2px;width:150.20000000000005px;justify-content:flex-end;padding-right:8.8px;">57,754,703.22</div><div class="c num" style="left:1301.4px;width:206.5999999999999px;justify-content:flex-end;padding-right:8.8px;">277,000.00</div><div class="c num" style="left:1508px;width:168.5px;justify-content:flex-end;padding-right:8.8px;"></div><div class="c num" style="left:1676.5px;width:168.9000000000001px;justify-content:flex-end;padding-right:8.8px;"></div></div>
<div class="mz" style="left:611px;top:604px;grid-template-columns:repeat(8,9.2px)"><div style="background:rgb(186,186,188)"></div><div style="background:rgb(178,179,182)"></div><div style="background:rgb(164,165,168)"></div><div style="background:rgb(169,174,180)"></div><div style="background:rgb(240,240,240)"></div><div style="background:rgb(215,215,215)"></div><div style="background:rgb(216,216,217)"></div><div style="background:rgb(191,191,193)"></div><div style="background:rgb(200,199,200)"></div><div style="background:rgb(183,183,185)"></div><div style="background:rgb(158,159,162)"></div><div style="background:rgb(188,184,180)"></div><div style="background:rgb(168,173,179)"></div><div style="background:rgb(241,241,241)"></div><div style="background:rgb(198,197,198)"></div><div style="background:rgb(193,192,193)"></div></div>
<div class="a" style="left:0;top:658px;width:1903px;height:1px;background:#e7e7ea"></div>
<div class="a" style="left:0;top:630px;width:1903px;height:30px"><div class="c num" style="left:0px;width:84.5px;justify-content:center;">14</div><div class="c num" style="left:86.5px;width:154.0px;padding-left:10.8px;">2023<span class="hy">-</span>1</div><div class="c num" style="left:240.5px;width:150.0px;padding-left:10.5px;">2023<span class="hy">-</span>01<span class="hy">-</span>05</div><div class="c t16" style="left:390.5px;width:154.0px;padding-left:10.5px;color:#13b08e;">记<span style="font-size:17px;margin:0 1px">-</span>20</div><div class="c t16" style="left:544.5px;width:153.5px;padding-left:10.5px;">银行:02</div><div class="c num" style="left:698px;width:150px;justify-content:flex-end;padding-right:8.8px;">100,000.00</div><div class="c num" style="left:848px;width:153.5px;justify-content:flex-end;padding-right:8.8px;"></div><div class="c t16" style="left:1001.5px;width:149.70000000000005px;justify-content:flex-end;padding-right:9.5px;">借</div><div class="c num" style="left:1151.2px;width:150.20000000000005px;justify-content:flex-end;padding-right:8.8px;">57,854,703.22</div><div class="c num" style="left:1301.4px;width:206.5999999999999px;justify-content:flex-end;padding-right:8.8px;">100,000.00</div><div class="c num" style="left:1508px;width:168.5px;justify-content:flex-end;padding-right:8.8px;"></div><div class="c num" style="left:1676.5px;width:168.9000000000001px;justify-content:flex-end;padding-right:8.8px;"></div></div>
<div class="mz" style="left:611px;top:635px;grid-template-columns:repeat(8,9.2px)"><div style="background:rgb(194,194,196)"></div><div style="background:rgb(159,160,163)"></div><div style="background:rgb(199,195,191)"></div><div style="background:rgb(207,203,199)"></div><div style="background:rgb(211,211,211)"></div><div style="background:rgb(224,224,224)"></div><div style="background:rgb(230,230,230)"></div><div style="background:rgb(203,203,204)"></div><div style="background:rgb(198,198,200)"></div><div style="background:rgb(171,171,173)"></div><div style="background:rgb(190,186,182)"></div><div style="background:rgb(153,158,164)"></div><div style="background:rgb(210,210,210)"></div><div style="background:rgb(205,205,206)"></div><div style="background:rgb(212,212,213)"></div><div style="background:rgb(188,187,188)"></div></div>
<div class="a" style="left:0;top:689px;width:1903px;height:1px;background:#e7e7ea"></div>
<div class="a" style="left:0;top:661px;width:1903px;height:30px"><div class="c num" style="left:0px;width:84.5px;justify-content:center;">15</div><div class="c num" style="left:86.5px;width:154.0px;padding-left:10.8px;">2023<span class="hy">-</span>1</div><div class="c num" style="left:240.5px;width:150.0px;padding-left:10.5px;">2023<span class="hy">-</span>01<span class="hy">-</span>05</div><div class="c t16" style="left:390.5px;width:154.0px;padding-left:10.5px;color:#13b08e;">记<span style="font-size:17px;margin:0 1px">-</span>21</div><div class="c t16" style="left:544.5px;width:153.5px;padding-left:10.5px;">银行:02</div><div class="c num" style="left:698px;width:150px;justify-content:flex-end;padding-right:8.8px;">300,000.00</div><div class="c num" style="left:848px;width:153.5px;justify-content:flex-end;padding-right:8.8px;"></div><div class="c t16" style="left:1001.5px;width:149.70000000000005px;justify-content:flex-end;padding-right:9.5px;">借</div><div class="c num" style="left:1151.2px;width:150.20000000000005px;justify-content:flex-end;padding-right:8.8px;">58,154,703.22</div><div class="c num" style="left:1301.4px;width:206.5999999999999px;justify-content:flex-end;padding-right:8.8px;">300,000.00</div><div class="c num" style="left:1508px;width:168.5px;justify-content:flex-end;padding-right:8.8px;"></div><div class="c num" style="left:1676.5px;width:168.9000000000001px;justify-content:flex-end;padding-right:8.8px;"></div></div>
<div class="mz" style="left:611px;top:666px;grid-template-columns:repeat(8,9.2px)"><div style="background:rgb(189,189,191)"></div><div style="background:rgb(189,189,191)"></div><div style="background:rgb(160,161,164)"></div><div style="background:rgb(166,171,177)"></div><div style="background:rgb(169,174,180)"></div><div style="background:rgb(204,204,205)"></div><div style="background:rgb(210,210,211)"></div><div style="background:rgb(216,216,217)"></div><div style="background:rgb(187,187,189)"></div><div style="background:rgb(180,181,184)"></div><div style="background:rgb(156,161,167)"></div><div style="background:rgb(197,197,197)"></div><div style="background:rgb(228,228,228)"></div><div style="background:rgb(216,216,216)"></div><div style="background:rgb(201,201,202)"></div><div style="background:rgb(180,179,180)"></div></div>
<div class="a" style="left:0;top:720px;width:1903px;height:1px;background:#e7e7ea"></div>
<div class="a" style="left:0;top:692px;width:1903px;height:30px"><div class="c num" style="left:0px;width:84.5px;justify-content:center;">16</div><div class="c num" style="left:86.5px;width:154.0px;padding-left:10.8px;">2023<span class="hy">-</span>1</div><div class="c num" style="left:240.5px;width:150.0px;padding-left:10.5px;">2023<span class="hy">-</span>01<span class="hy">-</span>06</div><div class="c t16" style="left:390.5px;width:154.0px;padding-left:10.5px;color:#13b08e;">记<span style="font-size:17px;margin:0 1px">-</span>25</div><div class="c t16" style="left:544.5px;width:153.5px;padding-left:10.5px;">银行:02</div><div class="c num" style="left:698px;width:150px;justify-content:flex-end;padding-right:8.8px;">300.00</div><div class="c num" style="left:848px;width:153.5px;justify-content:flex-end;padding-right:8.8px;"></div><div class="c t16" style="left:1001.5px;width:149.70000000000005px;justify-content:flex-end;padding-right:9.5px;">借</div><div class="c num" style="left:1151.2px;width:150.20000000000005px;justify-content:flex-end;padding-right:8.8px;">58,155,003.22</div><div class="c num" style="left:1301.4px;width:206.5999999999999px;justify-content:flex-end;padding-right:8.8px;">300.00</div><div class="c num" style="left:1508px;width:168.5px;justify-content:flex-end;padding-right:8.8px;"></div><div class="c num" style="left:1676.5px;width:168.9000000000001px;justify-content:flex-end;padding-right:8.8px;"></div></div>
<div class="mz" style="left:611px;top:697px;grid-template-columns:repeat(8,9.2px)"><div style="background:rgb(195,195,197)"></div><div style="background:rgb(182,183,186)"></div><div style="background:rgb(206,202,198)"></div><div style="background:rgb(156,161,167)"></div><div style="background:rgb(222,222,222)"></div><div style="background:rgb(228,228,228)"></div><div style="background:rgb(211,211,212)"></div><div style="background:rgb(186,185,186)"></div><div style="background:rgb(159,160,163)"></div><div style="background:rgb(159,160,163)"></div><div style="background:rgb(168,173,179)"></div><div style="background:rgb(204,204,204)"></div><div style="background:rgb(220,220,220)"></div><div style="background:rgb(224,224,224)"></div><div style="background:rgb(211,211,212)"></div><div style="background:rgb(174,173,174)"></div></div>
<div class="a" style="left:0;top:751px;width:1903px;height:1px;background:#e7e7ea"></div>
<div class="a" style="left:0;top:723px;width:1903px;height:30px"><div class="c num" style="left:0px;width:84.5px;justify-content:center;">17</div><div class="c num" style="left:86.5px;width:154.0px;padding-left:10.8px;">2023<span class="hy">-</span>1</div><div class="c num" style="left:240.5px;width:150.0px;padding-left:10.5px;">2023<span class="hy">-</span>01<span class="hy">-</span>07</div><div class="c t16" style="left:390.5px;width:154.0px;padding-left:10.5px;color:#13b08e;">记<span style="font-size:17px;margin:0 1px">-</span>26</div><div class="c t16" style="left:544.5px;width:153.5px;padding-left:10.5px;">银行:03</div><div class="c num" style="left:698px;width:150px;justify-content:flex-end;padding-right:8.8px;">20,000.00</div><div class="c num" style="left:848px;width:153.5px;justify-content:flex-end;padding-right:8.8px;"></div><div class="c t16" style="left:1001.5px;width:149.70000000000005px;justify-content:flex-end;padding-right:9.5px;">借</div><div class="c num" style="left:1151.2px;width:150.20000000000005px;justify-content:flex-end;padding-right:8.8px;">58,175,003.22</div><div class="c num" style="left:1301.4px;width:206.5999999999999px;justify-content:flex-end;padding-right:8.8px;"></div><div class="c num" style="left:1508px;width:168.5px;justify-content:flex-end;padding-right:8.8px;"></div><div class="c num" style="left:1676.5px;width:168.9000000000001px;justify-content:flex-end;padding-right:8.8px;">20,000.00</div></div>
<div class="mz" style="left:611px;top:728px;grid-template-columns:repeat(8,9.2px)"><div style="background:rgb(187,187,189)"></div><div style="background:rgb(198,194,190)"></div><div style="background:rgb(196,192,188)"></div><div style="background:rgb(168,173,179)"></div><div style="background:rgb(161,166,172)"></div><div style="background:rgb(196,196,196)"></div><div style="background:rgb(213,213,214)"></div><div style="background:rgb(202,201,202)"></div><div style="background:rgb(172,172,174)"></div><div style="background:rgb(162,163,166)"></div><div style="background:rgb(212,208,204)"></div><div style="background:rgb(160,165,171)"></div><div style="background:rgb(220,220,220)"></div><div style="background:rgb(215,215,216)"></div><div style="background:rgb(200,200,201)"></div><div style="background:rgb(191,190,191)"></div></div>
<div class="a" style="left:0;top:783px;width:1903px;height:1px;background:#e7e7ea"></div>
<div class="a" style="left:0;top:755px;width:1903px;height:30px"><div class="c num" style="left:0px;width:84.5px;justify-content:center;">18</div><div class="c num" style="left:86.5px;width:154.0px;padding-left:10.8px;">2023<span class="hy">-</span>1</div><div class="c num" style="left:240.5px;width:150.0px;padding-left:10.5px;">2023<span class="hy">-</span>01<span class="hy">-</span>08</div><div class="c t16" style="left:390.5px;width:154.0px;padding-left:10.5px;color:#13b08e;">记<span style="font-size:17px;margin:0 1px">-</span>27</div><div class="c t16" style="left:544.5px;width:153.5px;padding-left:10.5px;">银行:02</div><div class="c num" style="left:698px;width:150px;justify-content:flex-end;padding-right:8.8px;">42,000.00</div><div class="c num" style="left:848px;width:153.5px;justify-content:flex-end;padding-right:8.8px;"></div><div class="c t16" style="left:1001.5px;width:149.70000000000005px;justify-content:flex-end;padding-right:9.5px;">借</div><div class="c num" style="left:1151.2px;width:150.20000000000005px;justify-content:flex-end;padding-right:8.8px;">58,217,003.22</div><div class="c num" style="left:1301.4px;width:206.5999999999999px;justify-content:flex-end;padding-right:8.8px;">42,000.00</div><div class="c num" style="left:1508px;width:168.5px;justify-content:flex-end;padding-right:8.8px;"></div><div class="c num" style="left:1676.5px;width:168.9000000000001px;justify-content:flex-end;padding-right:8.8px;"></div></div>
<div class="mz" style="left:611px;top:760px;grid-template-columns:repeat(8,9.2px)"><div style="background:rgb(192,191,192)"></div><div style="background:rgb(206,202,198)"></div><div style="background:rgb(186,182,178)"></div><div style="background:rgb(153,158,164)"></div><div style="background:rgb(207,207,207)"></div><div style="background:rgb(222,222,222)"></div><div style="background:rgb(208,208,209)"></div><div style="background:rgb(199,198,199)"></div><div style="background:rgb(172,172,174)"></div><div style="background:rgb(197,197,199)"></div><div style="background:rgb(186,182,178)"></div><div style="background:rgb(179,184,190)"></div><div style="background:rgb(208,208,208)"></div><div style="background:rgb(224,224,224)"></div><div style="background:rgb(227,227,227)"></div><div style="background:rgb(193,192,193)"></div></div>
<div class="a" style="left:0;top:814px;width:1903px;height:1px;background:#e7e7ea"></div>
<div class="a" style="left:0;top:786px;width:1903px;height:30px"><div class="c num" style="left:0px;width:84.5px;justify-content:center;">19</div><div class="c num" style="left:86.5px;width:154.0px;padding-left:10.8px;">2023<span class="hy">-</span>1</div><div class="c num" style="left:240.5px;width:150.0px;padding-left:10.5px;">2023<span class="hy">-</span>01<span class="hy">-</span>08</div><div class="c t16" style="left:390.5px;width:154.0px;padding-left:10.5px;color:#13b08e;">记<span style="font-size:17px;margin:0 1px">-</span>28</div><div class="c t16" style="left:544.5px;width:153.5px;padding-left:10.5px;">银行:02</div><div class="c num" style="left:698px;width:150px;justify-content:flex-end;padding-right:8.8px;">3,280.00</div><div class="c num" style="left:848px;width:153.5px;justify-content:flex-end;padding-right:8.8px;"></div><div class="c t16" style="left:1001.5px;width:149.70000000000005px;justify-content:flex-end;padding-right:9.5px;">借</div><div class="c num" style="left:1151.2px;width:150.20000000000005px;justify-content:flex-end;padding-right:8.8px;">58,220,283.22</div><div class="c num" style="left:1301.4px;width:206.5999999999999px;justify-content:flex-end;padding-right:8.8px;">3,280.00</div><div class="c num" style="left:1508px;width:168.5px;justify-content:flex-end;padding-right:8.8px;"></div><div class="c num" style="left:1676.5px;width:168.9000000000001px;justify-content:flex-end;padding-right:8.8px;"></div></div>
<div class="mz" style="left:611px;top:791px;grid-template-columns:repeat(8,9.2px)"><div style="background:rgb(171,171,173)"></div><div style="background:rgb(192,192,194)"></div><div style="background:rgb(187,183,179)"></div><div style="background:rgb(160,165,171)"></div><div style="background:rgb(199,199,199)"></div><div style="background:rgb(223,223,223)"></div><div style="background:rgb(204,204,205)"></div><div style="background:rgb(183,182,183)"></div><div style="background:rgb(170,171,174)"></div><div style="background:rgb(162,163,166)"></div><div style="background:rgb(209,205,201)"></div><div style="background:rgb(160,165,171)"></div><div style="background:rgb(194,194,194)"></div><div style="background:rgb(237,237,237)"></div><div style="background:rgb(231,231,231)"></div><div style="background:rgb(190,189,190)"></div></div>
<div class="a" style="left:0;top:845px;width:1903px;height:1px;background:#e7e7ea"></div>
<div class="a" style="left:0;top:817px;width:1903px;height:30px"><div class="c num" style="left:0px;width:84.5px;justify-content:center;">20</div><div class="c num" style="left:86.5px;width:154.0px;padding-left:10.8px;">2023<span class="hy">-</span>1</div><div class="c num" style="left:240.5px;width:150.0px;padding-left:10.5px;">2023<span class="hy">-</span>01<span class="hy">-</span>08</div><div class="c t16" style="left:390.5px;width:154.0px;padding-left:10.5px;color:#13b08e;">记<span style="font-size:17px;margin:0 1px">-</span>29</div><div class="c t16" style="left:544.5px;width:153.5px;padding-left:10.5px;">银行:02</div><div class="c num" style="left:698px;width:150px;justify-content:flex-end;padding-right:8.8px;">2,170.00</div><div class="c num" style="left:848px;width:153.5px;justify-content:flex-end;padding-right:8.8px;"></div><div class="c t16" style="left:1001.5px;width:149.70000000000005px;justify-content:flex-end;padding-right:9.5px;">借</div><div class="c num" style="left:1151.2px;width:150.20000000000005px;justify-content:flex-end;padding-right:8.8px;">58,222,453.22</div><div class="c num" style="left:1301.4px;width:206.5999999999999px;justify-content:flex-end;padding-right:8.8px;">2,170.00</div><div class="c num" style="left:1508px;width:168.5px;justify-content:flex-end;padding-right:8.8px;"></div><div class="c num" style="left:1676.5px;width:168.9000000000001px;justify-content:flex-end;padding-right:8.8px;"></div></div>
<div class="mz" style="left:611px;top:822px;grid-template-columns:repeat(8,9.2px)"><div style="background:rgb(161,162,165)"></div><div style="background:rgb(187,183,179)"></div><div style="background:rgb(173,178,184)"></div><div style="background:rgb(211,211,211)"></div><div style="background:rgb(230,230,230)"></div><div style="background:rgb(236,236,236)"></div><div style="background:rgb(195,195,196)"></div><div style="background:rgb(180,179,180)"></div><div style="background:rgb(182,182,184)"></div><div style="background:rgb(155,156,159)"></div><div style="background:rgb(184,180,176)"></div><div style="background:rgb(172,177,183)"></div><div style="background:rgb(207,207,207)"></div><div style="background:rgb(215,215,215)"></div><div style="background:rgb(209,209,210)"></div><div style="background:rgb(197,197,199)"></div></div>
<div class="a" style="left:0;top:876px;width:1903px;height:1px;background:#e7e7ea"></div>
<div class="a" style="left:0;top:848px;width:1903px;height:30px"><div class="c num" style="left:0px;width:84.5px;justify-content:center;">21</div><div class="c num" style="left:86.5px;width:154.0px;padding-left:10.8px;">2023<span class="hy">-</span>1</div><div class="c num" style="left:240.5px;width:150.0px;padding-left:10.5px;">2023<span class="hy">-</span>01<span class="hy">-</span>09</div><div class="c t16" style="left:390.5px;width:154.0px;padding-left:10.5px;color:#13b08e;">记<span style="font-size:17px;margin:0 1px">-</span>31</div><div class="c t16" style="left:544.5px;width:153.5px;padding-left:10.5px;">银行:0</div><div class="c num" style="left:698px;width:150px;justify-content:flex-end;padding-right:8.8px;">130,000.00</div><div class="c num" style="left:848px;width:153.5px;justify-content:flex-end;padding-right:8.8px;"></div><div class="c t16" style="left:1001.5px;width:149.70000000000005px;justify-content:flex-end;padding-right:9.5px;">借</div><div class="c num" style="left:1151.2px;width:150.20000000000005px;justify-content:flex-end;padding-right:8.8px;">58,352,453.22</div><div class="c num" style="left:1301.4px;width:206.5999999999999px;justify-content:flex-end;padding-right:8.8px;"></div><div class="c num" style="left:1508px;width:168.5px;justify-content:flex-end;padding-right:8.8px;"></div><div class="c num" style="left:1676.5px;width:168.9000000000001px;justify-content:flex-end;padding-right:8.8px;">130,000.00</div></div>
<div class="mz" style="left:602px;top:853px;grid-template-columns:repeat(9,9.2px)"><div style="background:rgb(195,194,195)"></div><div style="background:rgb(173,174,177)"></div><div style="background:rgb(206,202,198)"></div><div style="background:rgb(153,158,164)"></div><div style="background:rgb(219,219,219)"></div><div style="background:rgb(222,222,222)"></div><div style="background:rgb(174,173,174)"></div><div style="background:rgb(185,184,185)"></div><div style="background:rgb(187,187,189)"></div><div style="background:rgb(177,177,179)"></div><div style="background:rgb(182,183,186)"></div><div style="background:rgb(190,186,182)"></div><div style="background:rgb(157,162,168)"></div><div style="background:rgb(204,204,204)"></div><div style="background:rgb(190,190,191)"></div><div style="background:rgb(182,181,182)"></div><div style="background:rgb(208,208,209)"></div><div style="background:rgb(177,177,179)"></div></div>
<div class="vb" style="left:86px"></div>
<div class="vb" style="left:240px"></div>
<div class="vb" style="left:390px"></div>
<div class="vb" style="left:544px"></div>
<div class="vb" style="left:697px"></div>
<div class="vb" style="left:847px"></div>
<div class="vb" style="left:1001px"></div>
<div class="vb" style="left:1151px"></div>
<div class="vb" style="left:1301px"></div>
<div class="vb" style="left:1507px"></div>
<div class="vb" style="left:1676px"></div>
<div class="vb" style="left:1845px"></div>
<div class="vb" style="left:1902px"></div>
<div class="a" style="left:0;top:222px;width:1px;height:655px;background:#e3e3e6"></div>
<div class="a" style="left:1903px;top:222px;width:17px;height:656px;background:#f4f5f5"></div>
<div class="a" style="left:1904px;top:222px;width:15px;height:656px;background:#dfe5e4"></div>
<svg class="a" style="left:1907.4px;top:226.3px" width="10.5" height="10.5" viewBox="0 0 10.5 10.5"><path d="M5.25 0 L10.5 10.5 H0 Z" fill="#8b8e95"/></svg>
<div class="a" style="left:1904px;top:240px;width:15px;height:37px;border-radius:7.5px;background:#80d9c4"></div>
<svg class="a" style="left:1906.7px;top:864px" width="11.6" height="10.3" viewBox="0 0 11.6 10.3"><path d="M0 0 H11.6 L5.8 10.3 Z" fill="#8b8e95"/></svg>
<div class="a" style="left:0;top:877px;width:1920px;height:18px;background:#eceeee"></div>
<div class="a" style="left:1px;top:878px;width:1902px;height:13px;background:#dfe5e4"></div>
<svg class="a" style="left:8.8px;top:878.6px" width="7.5" height="12.2" viewBox="0 0 7.5 12.2"><path d="M7.5 0 V12.2 L0 6.1 Z" fill="#8b8e95"/></svg>
<div class="a" style="left:25px;top:878px;width:1736px;height:13px;border-radius:6.5px;background:#80d9c4"></div>
<svg class="a" style="left:1887.5px;top:879px" width="7.5" height="12" viewBox="0 0 7.5 12"><path d="M0 0 L7.5 6 L0 12 Z" fill="#8b8e95"/></svg>
<div class="a" style="left:1903px;top:878px;width:17px;height:13px;background:#f5f5f5"></div>
</body></html>
